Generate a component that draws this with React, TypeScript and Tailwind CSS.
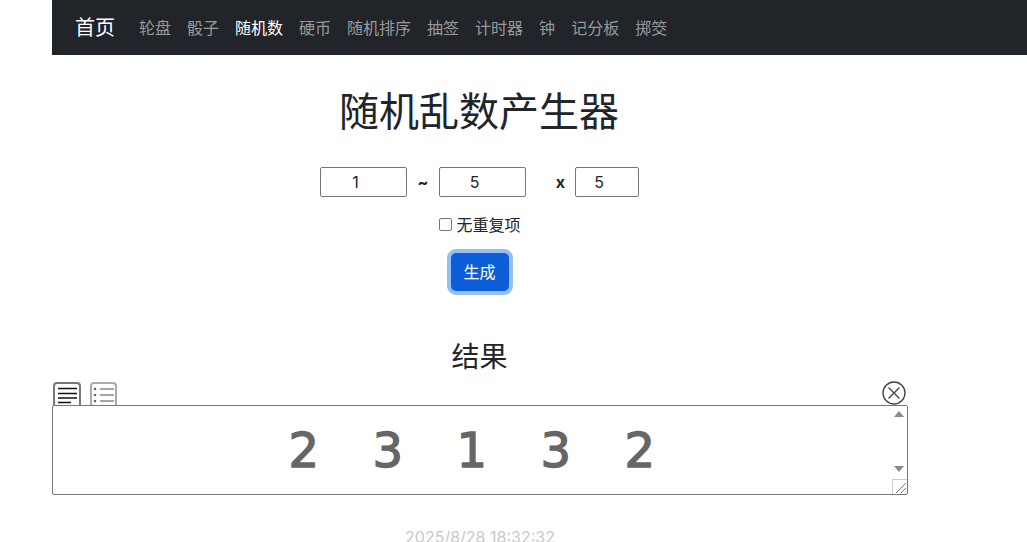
import React from 'react';

const CJK = "font-['Inter','Noto_Sans_CJK_SC',sans-serif]";

const navItems = ['轮盘', '骰子', '随机数', '硬币', '随机排序', '抽签', '计时器', '钟', '记分板', '掷筊'];
const numbers = [2, 3, 1, 3, 2];

const Navbar = () => (
  <nav className="flex h-[55px] items-center bg-[#212529] pl-[23px]">
    <a className="mr-4 text-[20px] leading-[30px] text-white">首页</a>
    {navItems.map((item) => (
      <a
        key={item}
        className={`px-2 text-[16px] leading-6 ${item === '随机数' ? 'text-white' : 'text-[#98999b]'}`}
      >
        {item}
      </a>
    ))}
  </nav>
);

const NumberInput = ({ value, width }: { value: string; width: string }) => (
  <input
    readOnly
    value={value}
    className={`${width} h-[30px] rounded-[2px] border border-[#767676] bg-white pr-4 text-center text-[16px] text-[#212529]`}
  />
);

const ResultTabs = () => (
  <div className="flex h-[23px] items-end">
    <div className="ml-px flex h-[23px] w-[28px] items-center justify-center rounded-t-[4px] border-2 border-b-0 border-[#777] bg-white">
      <svg width="19" height="18" viewBox="0 0 19 18" stroke="#111" strokeWidth="1.5">
        <path d="M0 2.5h19M0 7.5h19M0 12h19M0 16.5h13" />
      </svg>
    </div>
    <div className="ml-[9px] flex h-[23px] w-[27px] items-center justify-center rounded-t-[4px] border-2 border-b-0 border-[#aaa] bg-white">
      <svg width="21" height="18" viewBox="0 0 21 18" stroke="#888" strokeWidth="1.3" fill="#666">
        <circle cx="2" cy="3" r="1.3" stroke="none" />
        <circle cx="2" cy="9" r="1.3" stroke="none" />
        <circle cx="2" cy="15" r="1.3" stroke="none" />
        <path d="M7 3h14M7 9h14M7 15h14" />
      </svg>
    </div>
    <svg className="ml-auto mr-[2px]" width="24" height="24" viewBox="0 0 24 24" fill="none" stroke="#444" strokeWidth="1.4">
      <circle cx="12" cy="12" r="11" />
      <path d="M6.5 6.5l11 11M17.5 6.5l-11 11" />
    </svg>
  </div>
);

const ResultBox = () => (
  <div className="relative flex h-[90px] items-center justify-center rounded-[2px] border border-[#767676] bg-white">
    <div className="flex gap-[59px] pr-[22px] text-[48px] font-normal leading-none text-[#666] [-webkit-text-stroke:1.4px_#666] font-['DejaVu_Sans',sans-serif]">
      {numbers.map((n, i) => (
        <span key={i} className="w-[25px] text-center">{n}</span>
      ))}
    </div>
    {/* scrollbar arrows and resize handle */}
    <div className="absolute bottom-0 right-0 top-0 flex w-[16px] flex-col items-center bg-white">
      <div className="mt-[5px] h-0 w-0 border-x-[5px] border-b-[6px] border-x-transparent border-b-[#8a8a8a]" />
      <div className="mt-[49px] h-0 w-0 border-x-[5px] border-t-[6px] border-x-transparent border-t-[#8a8a8a]" />
      <div className="absolute bottom-0 right-0 h-[15px] w-[15px] border-l border-t border-[#ccc]">
        <svg width="14" height="14" viewBox="0 0 14 14" stroke="#777" strokeWidth="1">
          <path d="M3 13L13 3M8 13l5-5" />
        </svg>
      </div>
    </div>
  </div>
);

export default function App() {
  return (
    <div className={`${CJK} h-[542px] overflow-hidden bg-white pl-[52px] text-[#212529]`}>
      <Navbar />
      <main className="flex w-[856px] flex-col items-stretch">
        <h1 className="mt-[29px] h-[56px] pr-[2px] text-center text-[40px] leading-[56px]">随机乱数产生器</h1>
        <div className="mt-[27px] flex h-[30px] items-center justify-center pr-[1px]">
          <NumberInput value="1" width="w-[87px]" />
          <span className="w-[32px] text-center text-[16px] font-bold">~</span>
          <NumberInput value="5" width="w-[87px]" />
          <span className="w-[49px] pl-[20px] text-center text-[16px] font-bold">x</span>
          <NumberInput value="5" width="w-[64px]" />
        </div>
        <label className="mt-[16px] flex h-[24px] items-center justify-center pb-[1px] text-[16px]">
          <input type="checkbox" className="mr-[4px] h-[13px] w-[13px] appearance-none rounded-[2px] border border-[#767676] bg-white" />
          无重复项
        </label>
        <div className="mt-[16px] flex justify-center">
          <button className="h-[38px] w-[58px] rounded-[5px] bg-[#0b5ed7] pr-[1px] text-[16px] text-white ring-4 ring-[#98bdf3]">
            生成
          </button>
        </div>
        <h2 className="mt-[46px] h-[40px] pr-[1px] text-center text-[28px] leading-[40px]">结果</h2>
        <div className="mt-[5px]">
          <ResultTabs />
          <ResultBox />
        </div>
        <p className="mt-[30px] text-center text-[16px] leading-6 text-[#c9c9c9]">2025/8/28 18:32:32</p>
      </main>
    </div>
  );
}
